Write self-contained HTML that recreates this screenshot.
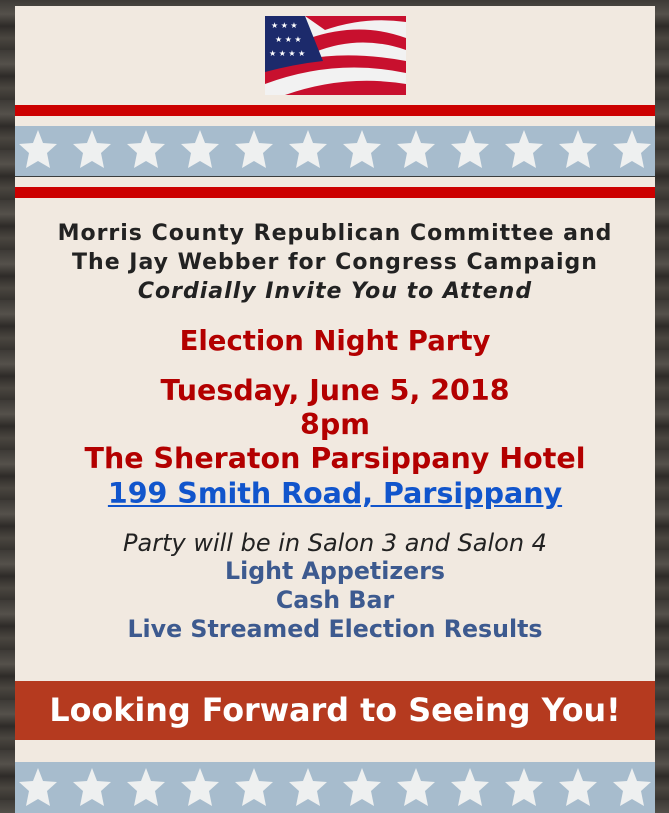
<!DOCTYPE html>
<html><head><meta charset="utf-8"><style>
html,body{margin:0;padding:0}
body{width:669px;height:813px;overflow:hidden;position:relative;
background:repeating-linear-gradient(180deg,#3d3a36 0,#55514b 14px,#2e2b28 26px,#4a4640 38px,#36332f 50px);
font-family:"DejaVu Sans","Liberation Sans",sans-serif;}
.card{position:absolute;left:15px;top:6px;width:640px;height:807px;background:#f1e9e0}
.l{position:absolute;left:15px;width:640px;text-align:center;white-space:nowrap}
.red{position:absolute;left:15px;width:640px;background:#cc0000}
.band{position:absolute;left:15px;width:640px;background:#a7bccd}
</style></head><body>
<div class="card"></div>
<svg style="position:absolute;left:265px;top:16px" width="141" height="79" viewBox="0 0 141 79">
<rect width="141" height="79" fill="#f2f2f2"/>
<path d="M40 0 L141 0 L141 6 Q100 0 60 14 Z" fill="#c8102e"/>
<path d="M45 22 Q95 5 141 22 L141 34 Q95 18 50 36 Z" fill="#c8102e"/>
<path d="M0 55 Q60 30 141 45 L141 57 Q70 42 0 68 Z" fill="#c8102e"/>
<path d="M20 79 Q80 58 141 68 L141 79 Z" fill="#c8102e"/>
<path d="M0 0 L40 0 Q50 25 58 45 Q30 48 0 56 Z" fill="#1c2a6b"/>
<g fill="#fff" font-size="8"><text x="6" y="12">★ ★ ★</text><text x="10" y="26">★ ★ ★</text><text x="4" y="40">★ ★ ★ ★</text></g>
</svg>
<div class="red" style="top:105px;height:11px"></div>
<svg class="band" style="top:126px;height:50px;border-bottom:1px solid #3a3d3d" width="640" height="50">
<g fill="#eef0f0">
<path id="s" d="M23 4 L28 17 L42 18 L32 27 L35 42 L23 35 L11 42 L14 27 L4 18 L18 17 Z"/>
<use href="#s" x="54"/><use href="#s" x="108"/><use href="#s" x="162"/><use href="#s" x="216"/><use href="#s" x="270"/><use href="#s" x="324"/><use href="#s" x="378"/><use href="#s" x="432"/><use href="#s" x="486"/><use href="#s" x="540"/><use href="#s" x="594"/>
</g></svg>
<div class="red" style="top:187px;height:11px"></div>
<div class="l" style="top:220px;line-height:28px;font-size:22px;letter-spacing:1px;font-weight:bold;color:#222">Morris County Republican Committee and</div>
<div class="l" style="top:249px;line-height:28px;font-size:22px;letter-spacing:1px;font-weight:bold;color:#222">The Jay Webber for Congress Campaign</div>
<div class="l" style="top:278px;line-height:28px;font-size:22px;letter-spacing:1px;font-weight:bold;font-style:italic;color:#222">Cordially Invite You to Attend</div>
<div class="l" style="top:324px;line-height:34px;font-size:27.5px;font-weight:bold;color:#b30000">Election Night Party</div>
<div class="l" style="top:374px;line-height:34px;font-size:28.5px;font-weight:bold;color:#b30000">Tuesday, June 5, 2018</div>
<div class="l" style="top:408px;line-height:34px;font-size:28.5px;font-weight:bold;color:#b30000">8pm</div>
<div class="l" style="top:442px;line-height:34px;font-size:28.5px;font-weight:bold;color:#b30000">The Sheraton Parsippany Hotel</div>
<div class="l" style="top:477px;line-height:34px;font-size:28.5px;font-weight:bold;color:#1155cc;text-decoration:underline">199 Smith Road, Parsippany</div>
<div class="l" style="top:529px;line-height:28px;font-size:24px;font-style:italic;color:#222">Party will be in Salon 3 and Salon 4</div>
<div class="l" style="top:557px;line-height:28px;font-size:23.7px;font-weight:bold;color:#3d5a8f">Light Appetizers</div>
<div class="l" style="top:586px;line-height:28px;font-size:23.7px;font-weight:bold;color:#3d5a8f">Cash Bar</div>
<div class="l" style="top:615px;line-height:28px;font-size:23.7px;font-weight:bold;color:#3d5a8f">Live Streamed Election Results</div>
<div class="l" style="top:681px;height:59px;line-height:59px;background:#b53a1f;color:#fff;font-size:31.8px;font-weight:bold">Looking Forward to Seeing You!</div>
<svg class="band" style="top:762px;height:51px" width="640" height="51">
<g fill="#eef0f0">
<path id="t" d="M23 6 L28 19 L42 20 L32 29 L35 44 L23 37 L11 44 L14 29 L4 20 L18 19 Z"/>
<use href="#t" x="54"/><use href="#t" x="108"/><use href="#t" x="162"/><use href="#t" x="216"/><use href="#t" x="270"/><use href="#t" x="324"/><use href="#t" x="378"/><use href="#t" x="432"/><use href="#t" x="486"/><use href="#t" x="540"/><use href="#t" x="594"/>
</g></svg>
</body></html>
